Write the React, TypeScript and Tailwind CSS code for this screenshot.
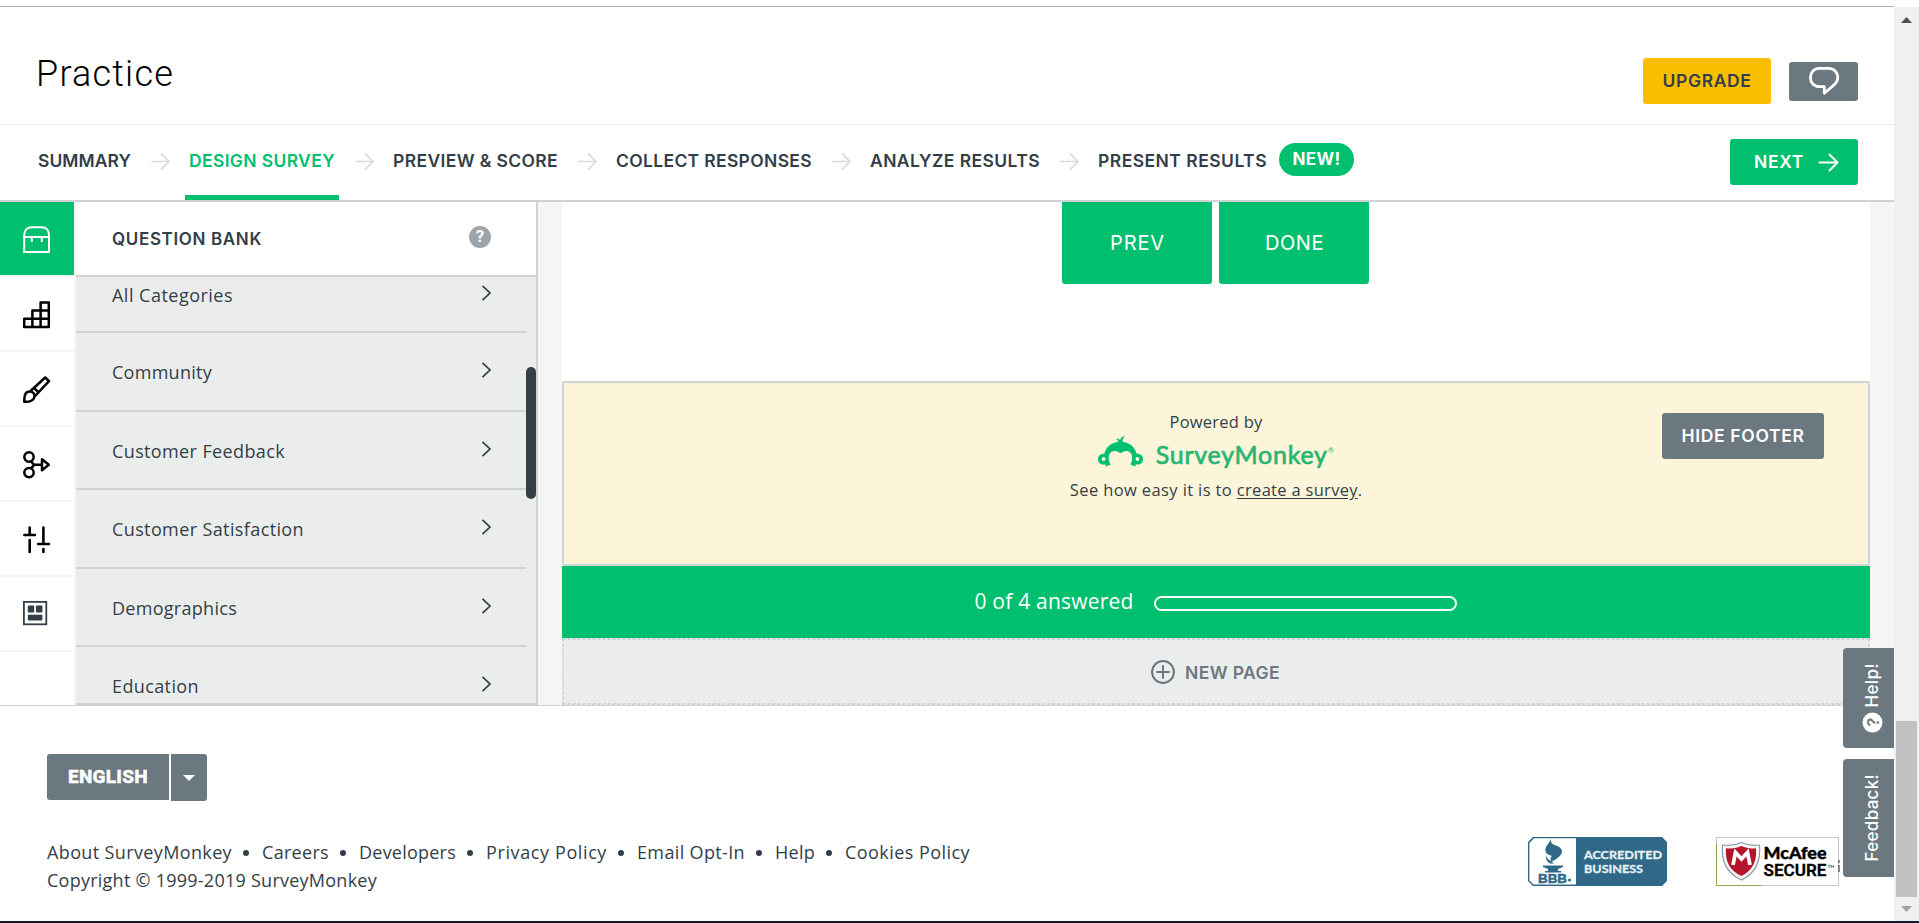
import React from "react";

function T({ w, className, children }: { w: number; className: string; children: string }) {
  const ref = React.useRef<HTMLSpanElement>(null);
  const [ls, setLs] = React.useState(0);
  React.useLayoutEffect(() => {
    const n = ref.current!.getBoundingClientRect().width;
    setLs((w - n) / children.length);
  }, []);
  return (
    <span ref={ref} className={"inline-block whitespace-pre " + className} style={{ letterSpacing: ls }}>
      {children}
    </span>
  );
}

function Arrow({ className, sw }: { className: string; sw: number }) {
  return (
    <svg className={className} viewBox="0 0 20 19" fill="none" stroke="currentColor" strokeWidth={sw} strokeLinecap="round" strokeLinejoin="round">
      <path d="M1 9.5H18.5M11 1.5l8 8-8 8" />
    </svg>
  );
}

const steps = [
  { label: "SUMMARY", w: 93 },
  { label: "DESIGN SURVEY", w: 146, active: true },
  { label: "PREVIEW & SCORE", w: 165 },
  { label: "COLLECT RESPONSES", w: 196 },
  { label: "ANALYZE RESULTS", w: 170 },
  { label: "PRESENT RESULTS", w: 169 },
];

function Header() {
  return (
    <header className="mt-[6px] flex h-[119px] shrink-0 items-start justify-between border-t border-b border-t-[#b3b3b3] border-b-[#ebebeb] pr-9 pl-9">
      <h1 className="mt-[43px] font-['Roboto'] text-[36px] leading-[48px] font-light text-black">
        <T w={138} className="">Practice</T>
      </h1>
      <div className="mt-[51px] flex items-center gap-[18px]">
        <button className="flex h-[46px] w-32 items-center justify-center rounded-[3px] bg-[#f9be00] font-['Inter'] text-[17.5px] font-semibold">
          <T w={89} className="mt-px">UPGRADE</T>
        </button>
        <button className="flex h-[39px] w-[69px] items-start justify-center rounded-[3px] bg-[#6b787f] pt-[4px] text-white">
          <svg className="h-[30px] w-8" viewBox="0 0 32 30" fill="none" stroke="currentColor" strokeWidth="2.8" strokeLinejoin="round">
            <path d="M11.5 2.4H20.5C26 2.4 29.8 6.3 29.8 11.2C29.8 15 28 17.3 25.5 19.4L16.3 27.2V20.6H11.5C6 20.6 2.4 16.5 2.4 11.5S6 2.4 11.5 2.4Z" />
          </svg>
        </button>
      </div>
    </header>
  );
}

function Nav() {
  return (
    <nav className="flex h-[77px] shrink-0 items-start justify-between border-b-2 border-[#d0d2d3] pr-9 pl-[34px] font-['Inter']">
      <div className="flex">
        {steps.map((s, i) => (
          <div key={s.label} className="flex h-[75px] items-start">
            {i > 0 && <Arrow className="mt-[27px] mr-[15px] ml-[16px] h-[19px] w-[19px] text-[#d8dadb]" sw={1.8} />}
            <div className={"h-[75px] px-1 pt-[22px] text-[17.5px] leading-[28px] font-semibold " + (s.active ? "border-b-[5px] border-[#00bf6f] text-[#00bf6f]" : "")}>
              <T w={s.w} className="">{s.label}</T>
            </div>
          </div>
        ))}
        <span className="mt-[18px] ml-[8px] flex h-[33px] w-[75px] items-center justify-center rounded-full bg-[#00bf6f] text-[17px] font-bold text-white">
          <T w={48} className="mt-px">NEW!</T>
        </span>
      </div>
      <button className="mt-[14px] flex h-[46px] w-32 items-center rounded-[3px] bg-[#00bf6f] pl-6 text-[17.5px] font-semibold text-white">
        <T w={50} className="">NEXT</T>
        <Arrow className="ml-[14px] h-[19px] w-[21px]" sw={2} />
      </button>
    </nav>
  );
}

const railIcons = [
  <svg key="a" className="h-7 w-7" viewBox="0 0 28 28" fill="none" stroke="white" strokeWidth="2">
    <path d="M1.2 26V9C1.2 4 4.5 1.2 9 1.2H18.5C23 1.2 26 4 26 9V26ZM1.2 11H26M8.8 11V16M18.8 11V16" />
  </svg>,
  <svg key="b" className="h-7 w-7" viewBox="0 0 28 28" fill="none" stroke="black" strokeWidth="2.5" strokeLinejoin="round">
    <path d="M1.2 17.8H25.8V26H1.2ZM9.4 26V9.6H25.8V26M17.6 26V1.4H25.8V18" />
  </svg>,
  <svg key="c" className="h-7 w-7" viewBox="0 0 28 28" fill="none" stroke="black" strokeWidth="2.5" strokeLinejoin="round">
    <path d="M1.3 25.8C1 19 2.5 15.5 6.8 15.5C10 15.5 11.8 18 11.5 20.3C11 25 7 26 1.3 25.8ZM7 15.5L22.2 1.5L26 5.2L11.6 20.5M11.3 12.2L15.2 16" />
  </svg>,
  <svg key="d" className="h-7 w-7" viewBox="0 0 28 28" fill="none" stroke="black" strokeWidth="2.5" strokeLinejoin="round">
    <circle cx="6" cy="6" r="4.7" />
    <circle cx="6" cy="21.6" r="4.7" />
    <path d="M8 10.5L11.2 13.8L8 17.3M11.2 13.8H18.8M19 8.3V19.2L25.8 13.8Z" />
  </svg>,
  <svg key="e" className="h-7 w-7" viewBox="0 0 28 28" fill="none" stroke="black" strokeWidth="2.6" strokeLinecap="round">
    <path d="M6.7 1.5V9M1.4 9H12M6.7 14V26M20.4 1.5V18M15.2 18H26M20.4 23V26" />
  </svg>,
  <svg key="f" className="h-7 w-7" viewBox="0 0 28 28">
    <rect x="0.9" y="0.9" width="22.4" height="22.4" fill="none" stroke="#333e48" strokeWidth="1.8" />
    <rect x="4.8" y="4.5" width="6.4" height="7" rx="0.8" fill="#333e48" />
    <rect x="13" y="4.5" width="6.4" height="7" rx="0.8" fill="#333e48" />
    <rect x="4.8" y="13.8" width="14.6" height="5.6" rx="0.8" fill="#333e48" />
  </svg>,
];

function Rail() {
  return (
    <div className="flex w-[76px] shrink-0 flex-col border-r-2 border-[#f4f5f5]">
      {railIcons.map((icon, i) => (
        <div key={i} className={"flex h-[75px] shrink-0 items-start border-b-2 border-[#f4f5f5] pt-6 pl-[23px] " + (i === 0 ? "bg-[#00bf6f]" : "bg-white")}>
          {icon}
        </div>
      ))}
    </div>
  );
}

const categories = [
  { label: "All Categories", w: 121, cls: "h-[56px] pt-[4px]" },
  { label: "Community", w: 100, cls: "h-[79px] pt-[25px]" },
  { label: "Customer Feedback", w: 173, cls: "h-[78px] pt-[25px]" },
  { label: "Customer Satisfaction", w: 192, cls: "h-[79px] pt-[25px]" },
  { label: "Demographics", w: 125, cls: "h-[78px] pt-[25px]" },
  { label: "Education", w: 87, cls: "h-[78px] pt-[25px]" },
];

function QuestionBank() {
  return (
    <aside className="relative flex w-[462px] shrink-0 flex-col overflow-hidden border-r-2 border-b-2 border-[#d0d2d3] bg-[#ebeded]">
      <div className="flex h-[75px] shrink-0 items-start justify-between border-b-2 border-[#d0d2d3] bg-white pr-[45px] pl-9">
        <T w={150} className="mt-[23px] font-['Inter'] text-[17px] leading-[28px] font-semibold">QUESTION BANK</T>
        <span className="mt-[24px] flex h-[22px] w-[22px] items-center justify-center rounded-full bg-[#9da5aa] font-['Roboto'] text-[17px] font-bold text-white">?</span>
      </div>
      {categories.map((c) => (
        <div key={c.label} className={"mr-[10px] flex shrink-0 items-start justify-between border-b-2 border-[#d0d2d3] pr-[34px] pl-9 " + c.cls}>
          <T w={c.w} className="text-[18px] leading-[28px]">{c.label}</T>
          <svg className="mt-[4px] h-4 w-[11px]" viewBox="0 0 11 16" fill="none" stroke="#333e48" strokeWidth="1.7">
            <path d="M1.5 0.8L9 8L1.5 15.2" />
          </svg>
        </div>
      ))}
      <div className="absolute top-[165px] right-0 h-[132px] w-[10px] rounded-full bg-[#333e48]" />
    </aside>
  );
}

function Monkey() {
  return (
    <svg className="h-[31px] w-[45px]" viewBox="0 0 45 31" fill="#00bf6f">
      <path d="M6.3 17.8C8 10.5 14 6.6 20.4 5.8C20 4.4 19.2 3.4 17.9 2.9C19.6 2.5 21.2 3 22.2 4.2C22.4 2 24.2 0.2 26.8 0.3C25.3 1.6 24.6 3 24.6 5.8C31 6.6 36.9 10.5 38.7 17.8C42.5 17.5 45 20 45 23.3C45 27 41.6 29.4 38 28.3L37 30.6L32.4 28.6C36 22 34 15.3 29 14.9C26 14.7 24.2 15.8 22.5 17.3C20.8 15.8 19 14.7 16 14.9C11 15.3 9 22 12.6 28.6L8 30.6L7 28.3C3.4 29.4 0 27 0 23.3C0 20 2.5 17.5 6.3 17.8Z" />
      <circle cx="5.6" cy="23" r="1.9" fill="#fdf5d9" />
      <circle cx="39.4" cy="23" r="1.9" fill="#fdf5d9" />
    </svg>
  );
}

function Canvas() {
  return (
    <main className="flex grow flex-col bg-[#f4f6f6] pr-6 pl-6">
      <div className="flex h-[179px] shrink-0 items-start justify-center gap-[7px] bg-white pr-px font-['Inter'] text-[20px] text-white">
        <button className="h-[82px] w-[150px] rounded-b-[3px] bg-[#00bf6f] pb-px pl-px"><T w={55} className="">PREV</T></button>
        <button className="h-[82px] w-[150px] rounded-b-[3px] bg-[#00bf6f] pb-px pl-px"><T w={59} className="">DONE</T></button>
      </div>
      <section className="relative flex h-[185px] shrink-0 flex-col items-center rounded-[3px] border-2 border-[#d0d2d3] bg-[#fdf5d9] pt-[26px]">
        <T w={93} className="text-[16.5px] leading-[26px]">Powered by</T>
        <div className="flex h-[42px] items-start">
          <div className="mt-[1px] flex"><Monkey /></div>
          <span className="ml-[13px] flex items-start pt-[2px] font-['Lato'] text-[25px] leading-[34px] font-normal text-[#2ab573]">
            <T w={172} className="[-webkit-text-stroke:0.7px_#2ab573]">SurveyMonkey</T>
            <span className="text-[8px] leading-[26px] font-normal">®</span>
          </span>
        </div>
        <div className="flex text-[16.5px] leading-[26px]">
          <T w={167} className="">See how easy it is to </T>
          <T w={121} className="underline underline-offset-2">create a survey</T>.
        </div>
        <button className="absolute top-[30px] right-[44px] flex h-[46px] w-[162px] items-center justify-center rounded-[3px] bg-[#6b787f] font-['Inter'] text-[17.5px] font-semibold text-white">
          <T w={123} className="">HIDE FOOTER</T>
        </button>
      </section>
      <div className="flex h-[72px] shrink-0 items-center justify-center gap-[20px] bg-[#00bf6f] pr-px text-[21px] text-white">
        <T w={159} className="">0 of 4 answered</T>
        <div className="mt-[3px] h-[15px] w-[303px] rounded-full border-2 border-white" />
      </div>
      <div className="flex h-[67px] shrink-0 border border-dashed border-[#d0d2d3] bg-[#ebeded]">
        <div className="flex grow items-center justify-center gap-[10px] border border-dashed border-[#d0d2d3] pt-px pr-px font-['Inter'] text-[17.5px] font-semibold text-[#6b787f]">
          <svg className="h-6 w-6" viewBox="0 0 24 24" fill="none" stroke="currentColor" strokeWidth="2">
            <circle cx="12" cy="12" r="10.9" />
            <path d="M12 6V18M6 12H18" strokeLinecap="round" />
          </svg>
          <T w={95} className="mt-[2px]">NEW PAGE</T>
        </div>
      </div>
    </main>
  );
}

const links = [
  { label: "About SurveyMonkey", w: 185 },
  { label: "Careers", w: 67 },
  { label: "Developers", w: 97 },
  { label: "Privacy Policy", w: 121 },
  { label: "Email Opt-In", w: 108 },
  { label: "Help", w: 40 },
  { label: "Cookies Policy", w: 125 },
];

function Badges() {
  return (
    <div className="flex gap-[49px]">
      <svg className="h-[49px] w-[139px]" viewBox="0 0 139 49">
        <path d="M5 0H134L139 5V44L134 49H5L0 44V5Z" fill="#2f6987" />
        <path d="M6 1.2H48V47.6H5.5L1.4 43.5V6Z" fill="#fff" />
        <path d="M23 2C21 7 17 9 17.5 14C18 17 21 18 24 19C22 21 22 22 23.5 25C28 22 34 19 34 14.5C34 11 30 9 26.5 8C23.5 7 22.5 5 23 2Z" fill="#2f6987" />
        <path d="M18 18C18 22 22 23 26 26.5H22C19 25 17 21 18 18ZM15 28.5H35V30L30 32V34H33V35.5H17V34H20V32L15 30Z" fill="#2f6987" />
        <text x="10" y="45.5" fontFamily="Liberation Sans" fontWeight="bold" fontSize="13" textLength="29" lengthAdjust="spacingAndGlyphs" stroke="#2f6987" strokeWidth="0.5" fill="#2f6987">BBB</text>
        <circle cx="41.5" cy="43" r="1.6" fill="#2f6987" />
        <text x="56" y="22" fontFamily="Lato" fontWeight="bold" fontSize="12" textLength="78" lengthAdjust="spacingAndGlyphs" stroke="#e9f0f4" strokeWidth="0.3" fill="#e9f0f4">ACCREDITED</text>
        <text x="56" y="35.5" fontFamily="Lato" fontWeight="bold" fontSize="12" textLength="59" lengthAdjust="spacingAndGlyphs" stroke="#e9f0f4" strokeWidth="0.3" fill="#e9f0f4">BUSINESS</text>
      </svg>
      <svg className="h-[49px] w-[125px]" viewBox="0 0 125 49">
        <rect x="0.5" y="0.5" width="122" height="48" fill="#fff" stroke="#c6c8c8" />
        <path d="M0.5 7V48.5H45" fill="none" stroke="#8aa84f" />
        <path d="M6.5 8C14 9 20 8 25.5 5.5C31 8 37 9 43.5 8C45 24 40 36 25.5 43C10 36 5 24 6.5 8Z" fill="#f4f5f6" stroke="#8f99a3" strokeWidth="1.2" />
        <path d="M10 11.2C16 12 21 11 25.5 9C30 11 34 12 40 11.2C41 24 37 33 25.5 39C13 33 9 24 10 11.2Z" fill="#b5152b" />
        <path d="M17 28L19.5 15.5L25.5 22L31.5 15.5L34 28" fill="none" stroke="#fff" strokeWidth="3.8" />
        <text x="47.5" y="22" fontFamily="Lato" fontWeight="900" fontSize="17" textLength="63" lengthAdjust="spacingAndGlyphs" fill="#000" stroke="#000" strokeWidth="0.4">McAfee</text>
        <text x="47.5" y="39" fontFamily="Roboto" fontWeight="600" fontSize="16.5" textLength="63" lengthAdjust="spacingAndGlyphs" fill="#000" stroke="#000" strokeWidth="0.3">SECURE</text>
        <path d="M112 28.3H114.4M113.2 28.3V31M115.2 31V28.3L116.4 30L117.6 28.3V31" fill="none" stroke="#000" strokeWidth="0.5" />
        <path d="M123 23V26M123 28V35" stroke="#222" strokeWidth="1" />
      </svg>
    </div>
  );
}

function Footer() {
  return (
    <footer className="flex grow justify-between border-t border-[#d0d2d3] pl-[47px]">
      <div className="pt-[48px]">
        <div className="flex gap-[2px] text-white">
          <button className="flex h-[46px] w-[122px] items-center justify-center rounded-l-[3px] bg-[#6b787f] font-['Roboto'] text-[19px] font-extrabold">
            <T w={80} className="[-webkit-text-stroke:0.4px_white]">ENGLISH</T>
          </button>
          <button className="flex h-[47px] w-[36px] items-center justify-center rounded-r-[3px] bg-[#6b787f]">
            <svg className="h-[6px] w-3" viewBox="0 0 12 6" fill="white"><path d="M0 0H12L6 6Z" /></svg>
          </button>
        </div>
        <div className="mt-[37px] flex text-[18px] leading-[28px]">
          {links.map((l, i) => (
            <div key={l.label} className="flex items-center">
              {i > 0 && <span className="mr-[13px] ml-[11px] mt-px h-[6px] w-[6px] rounded-full bg-[#333e48]" />}
              <T w={l.w} className="">{l.label}</T>
            </div>
          ))}
        </div>
        <T w={330} className="text-[18px] leading-[28px]">Copyright © 1999-2019 SurveyMonkey</T>
      </div>
      <div className="mt-[131px] mr-[53px]"><Badges /></div>
    </footer>
  );
}

function Scrollbar() {
  return (
    <div className="mt-[7px] flex w-[25px] shrink-0 flex-col items-center justify-between bg-[#f0f0f0] pt-[10px] pb-[9px]">
      <svg className="h-[6px] w-[11px]" viewBox="0 0 11 6" fill="#505050"><path d="M5.5 0L11 6H0Z" /></svg>
      <div className="flex flex-col items-center">
        <div className="mb-[9px] h-[176px] w-[21px] bg-[#c1c1c1]" />
        <svg className="h-[6px] w-[11px]" viewBox="0 0 11 6" fill="#a3a3a3"><path d="M0 0H11L5.5 6Z" /></svg>
      </div>
    </div>
  );
}

export default function App() {
  return (
    <div className="relative flex h-[923px] w-[1919px] flex-col overflow-hidden bg-white font-['Open_Sans',sans-serif] text-[#333e48]">
      <div className="flex h-[921px] shrink-0">
        <div className="flex w-[1894px] flex-col">
          <Header />
          <Nav />
          <div className="flex h-[503px] shrink-0">
            <Rail />
            <QuestionBank />
            <Canvas />
          </div>
          <Footer />
        </div>
        <Scrollbar />
      </div>
      <div className="h-[2px] bg-[#0c1c28]" />
      <div className="absolute top-[648px] right-[25px] flex flex-col gap-[11px] font-['Inter'] text-[17px] font-medium text-white">
        <div className="flex h-[100px] w-[51px] items-center justify-center rounded-l-[4px] bg-[#6b787f] pl-[8px]">
          <div className="flex rotate-180 items-center gap-[5px] [writing-mode:vertical-rl]">
            <span className="flex h-[20px] w-[20px] items-center justify-center rounded-full bg-white text-[16px] font-semibold text-[#6b787f]">?</span>
            <span className="tracking-[0.4px]">Help!</span>
          </div>
        </div>
        <div className="flex h-[118px] w-[51px] items-center justify-center rounded-l-[4px] bg-[#6b787f] pl-[8px]">
          <span className="rotate-180 tracking-[0.3px] [writing-mode:vertical-rl]">Feedback!</span>
        </div>
      </div>
    </div>
  );
}
